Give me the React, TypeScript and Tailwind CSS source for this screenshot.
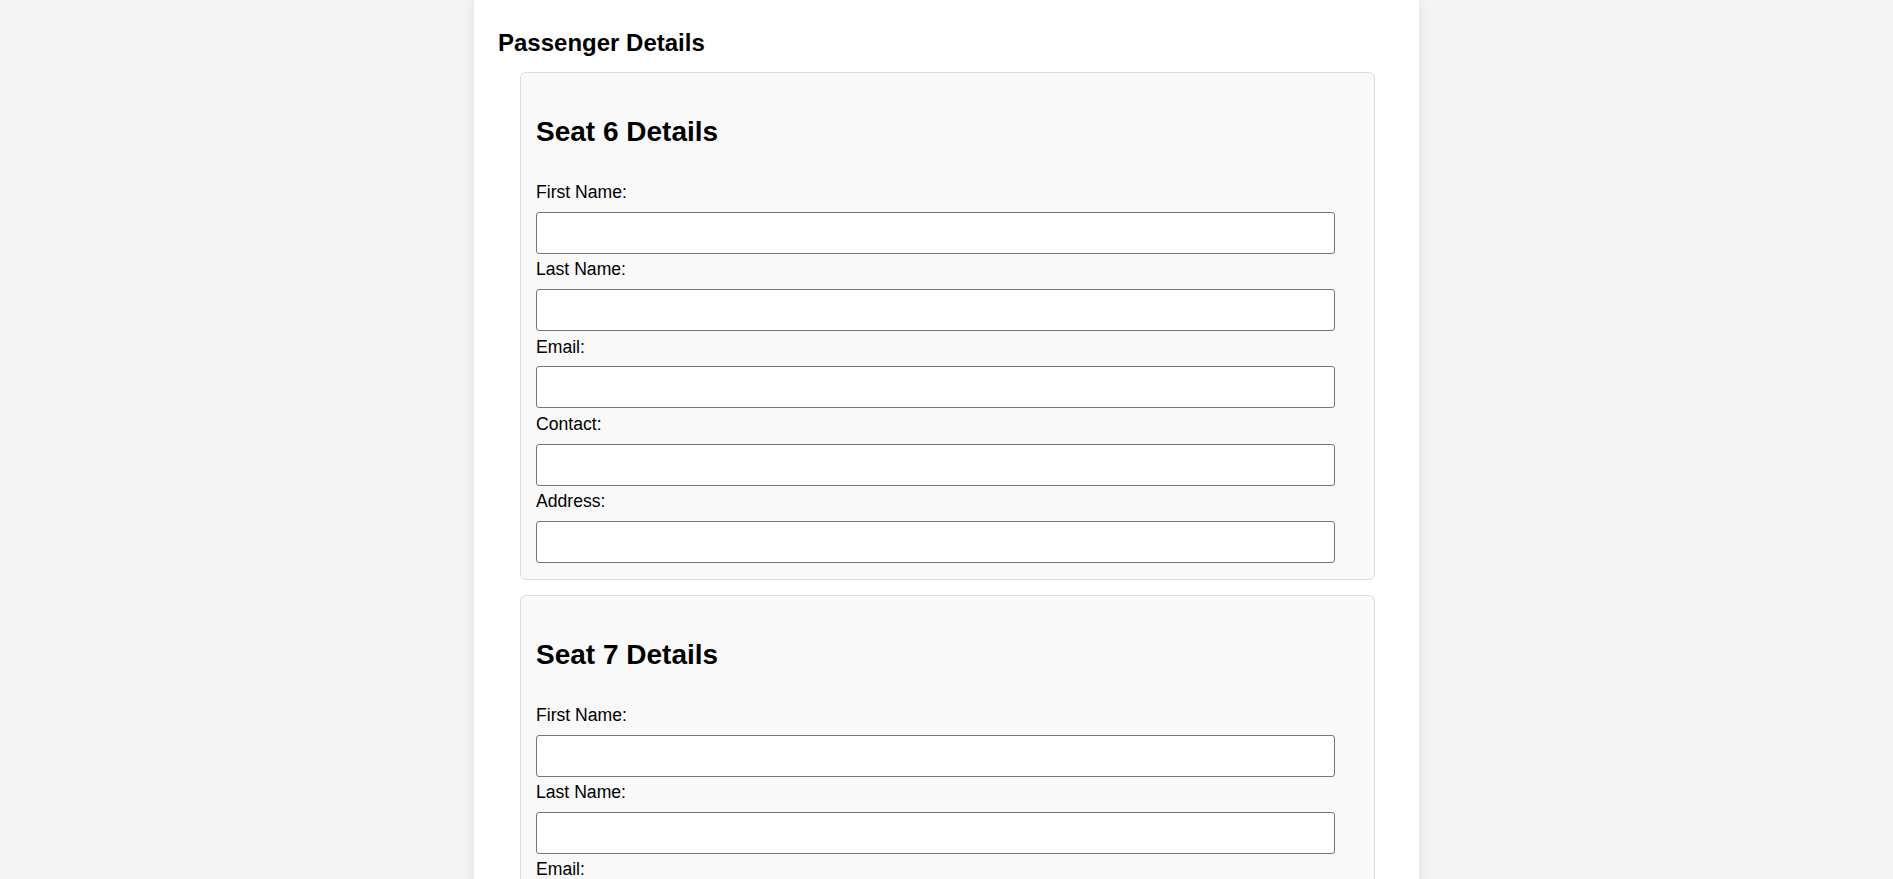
import React from 'react';

const fields = ['First Name:', 'Last Name:', 'Email:', 'Contact:', 'Address:'];

function SeatCard({ seat }: { seat: number }) {
  return (
    <div className="w-[855px] ml-[24px] mb-[15px] bg-[#f9f9f9] border border-[#dddddd] rounded-[6px] px-[15px] pt-[15px] pb-[16px]">
      <h2 className="mt-[28px] mb-[34px] text-[28px] leading-[32px] font-bold text-black">
        Seat {seat} Details
      </h2>
      {fields.map((label, i) => (
        <div key={label} className={i < fields.length - 1 ? 'mb-[5.4px]' : ''}>
          <label className="block text-[17.6px] leading-[20px] text-black mb-[9.8px]">{label}</label>
          <input
            type="text"
            className="block w-[799px] h-[42px] bg-white border border-[#767676] rounded-[3px] px-2 text-[17.6px] outline-none"
          />
        </div>
      ))}
    </div>
  );
}

export default function App() {
  return (
    <div className="h-screen overflow-hidden bg-[#f4f4f4] font-['Liberation_Sans',Arial,sans-serif]">
      <div className="w-[945px] mx-auto bg-white shadow-[0_0_12px_rgba(0,0,0,0.1)] pt-[29px] pl-[22px] pb-10 min-h-full">
        <h3 className="pl-[2px] text-[24px] leading-[28px] font-bold text-black mb-[15.3px]">Passenger Details</h3>
        <SeatCard seat={6} />
        <SeatCard seat={7} />
      </div>
    </div>
  );
}
